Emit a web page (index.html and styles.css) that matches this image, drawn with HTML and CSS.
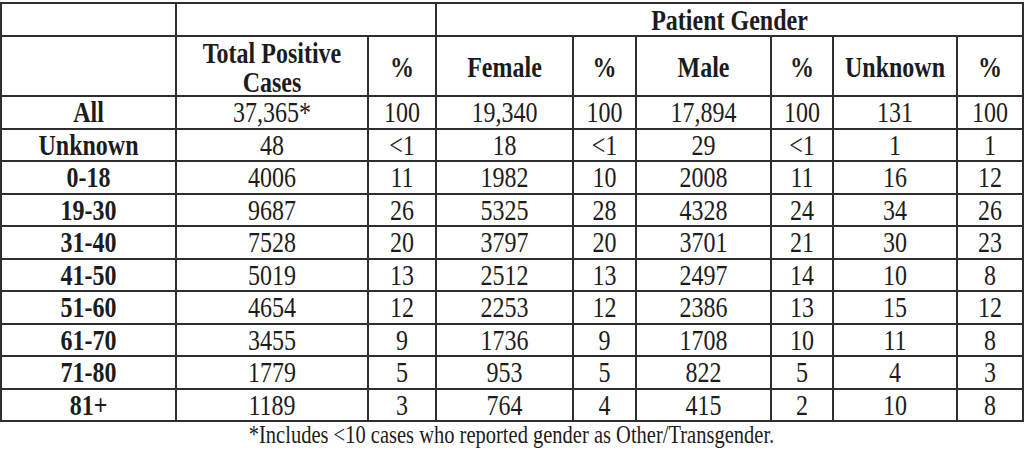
FILE: index.html
```html
<!DOCTYPE html>
<html>
<head>
<meta charset="utf-8">
<link rel="stylesheet" href="styles.css">
</head>
<body>
<div class="wrap">
<table class="cases">
<colgroup>
<col class="c-age"><col class="c-total"><col class="c-pct1"><col class="c-fem"><col class="c-pct2"><col class="c-male"><col class="c-pct3"><col class="c-unk"><col class="c-pct4">
</colgroup>
<thead>
<tr class="h1"><th></th><th colspan="2"></th><th colspan="6"><span class="t">Patient Gender</span></th></tr>
<tr class="h2"><th></th><th><span class="t">Total Positive<br>Cases</span></th><th><span class="t">%</span></th><th><span class="t">Female</span></th><th><span class="t">%</span></th><th><span class="t">Male</span></th><th><span class="t">%</span></th><th><span class="t">Unknown</span></th><th><span class="t">%</span></th></tr>
</thead>
<tbody>
<tr><th><span class="t">All</span></th><td><span class="t">37,365*</span></td><td><span class="t">100</span></td><td><span class="t">19,340</span></td><td><span class="t">100</span></td><td><span class="t">17,894</span></td><td><span class="t">100</span></td><td><span class="t">131</span></td><td><span class="t">100</span></td></tr>
<tr><th><span class="t">Unknown</span></th><td><span class="t">48</span></td><td><span class="t">&lt;1</span></td><td><span class="t">18</span></td><td><span class="t">&lt;1</span></td><td><span class="t">29</span></td><td><span class="t">&lt;1</span></td><td><span class="t">1</span></td><td><span class="t">1</span></td></tr>
<tr><th><span class="t">0-18</span></th><td><span class="t">4006</span></td><td><span class="t">11</span></td><td><span class="t">1982</span></td><td><span class="t">10</span></td><td><span class="t">2008</span></td><td><span class="t">11</span></td><td><span class="t">16</span></td><td><span class="t">12</span></td></tr>
<tr><th><span class="t">19-30</span></th><td><span class="t">9687</span></td><td><span class="t">26</span></td><td><span class="t">5325</span></td><td><span class="t">28</span></td><td><span class="t">4328</span></td><td><span class="t">24</span></td><td><span class="t">34</span></td><td><span class="t">26</span></td></tr>
<tr><th><span class="t">31-40</span></th><td><span class="t">7528</span></td><td><span class="t">20</span></td><td><span class="t">3797</span></td><td><span class="t">20</span></td><td><span class="t">3701</span></td><td><span class="t">21</span></td><td><span class="t">30</span></td><td><span class="t">23</span></td></tr>
<tr><th><span class="t">41-50</span></th><td><span class="t">5019</span></td><td><span class="t">13</span></td><td><span class="t">2512</span></td><td><span class="t">13</span></td><td><span class="t">2497</span></td><td><span class="t">14</span></td><td><span class="t">10</span></td><td><span class="t">8</span></td></tr>
<tr><th><span class="t">51-60</span></th><td><span class="t">4654</span></td><td><span class="t">12</span></td><td><span class="t">2253</span></td><td><span class="t">12</span></td><td><span class="t">2386</span></td><td><span class="t">13</span></td><td><span class="t">15</span></td><td><span class="t">12</span></td></tr>
<tr><th><span class="t">61-70</span></th><td><span class="t">3455</span></td><td><span class="t">9</span></td><td><span class="t">1736</span></td><td><span class="t">9</span></td><td><span class="t">1708</span></td><td><span class="t">10</span></td><td><span class="t">11</span></td><td><span class="t">8</span></td></tr>
<tr><th><span class="t">71-80</span></th><td><span class="t">1779</span></td><td><span class="t">5</span></td><td><span class="t">953</span></td><td><span class="t">5</span></td><td><span class="t">822</span></td><td><span class="t">5</span></td><td><span class="t">4</span></td><td><span class="t">3</span></td></tr>
<tr><th><span class="t">81+</span></th><td><span class="t">1189</span></td><td><span class="t">3</span></td><td><span class="t">764</span></td><td><span class="t">4</span></td><td><span class="t">415</span></td><td><span class="t">2</span></td><td><span class="t">10</span></td><td><span class="t">8</span></td></tr>
</tbody>
</table>
<p class="note"><span class="t">*Includes &lt;10 cases who reported gender as Other/Transgender.</span></p>
</div>
</body>
</html>
```

FILE: styles.css
```css
html, body {
  margin: 0;
  padding: 0;
  background: #ffffff;
}
.wrap {
  padding-top: 2px;
  width: 1023px;
  font-family: "Liberation Serif", "Times New Roman", serif;
  color: #1c1c1c;
}
.cases {
  border-collapse: collapse;
  table-layout: fixed;
  width: 1022px;
  font-size: 24px;
}
.cases th,
.cases td {
  border: 2px solid #2e2e2e;
  padding: 0;
  text-align: center;
  vertical-align: middle;
  line-height: 28px;
}
.cases th {
  font-weight: bold;
}
.t {
  display: inline-block;
  transform: scaleY(1.2);
}
.c-age { width: 175px; }
.c-total { width: 192px; }
.c-pct1 { width: 68px; }
.c-fem { width: 137px; }
.c-pct2 { width: 63px; }
.c-male { width: 135px; }
.c-pct3 { width: 62px; }
.c-unk { width: 124px; }
.c-pct4 { width: 66px; }
.h1 { height: 33px; }
.h2 { height: 60px; }
.h2 th {
  line-height: 23.5px;
  padding-top: 5px;
}
.cases tbody tr { height: 32.5px; }
.note {
  margin: 0;
  font-size: 20.5px;
  line-height: 26px;
  text-align: center;
}
```
